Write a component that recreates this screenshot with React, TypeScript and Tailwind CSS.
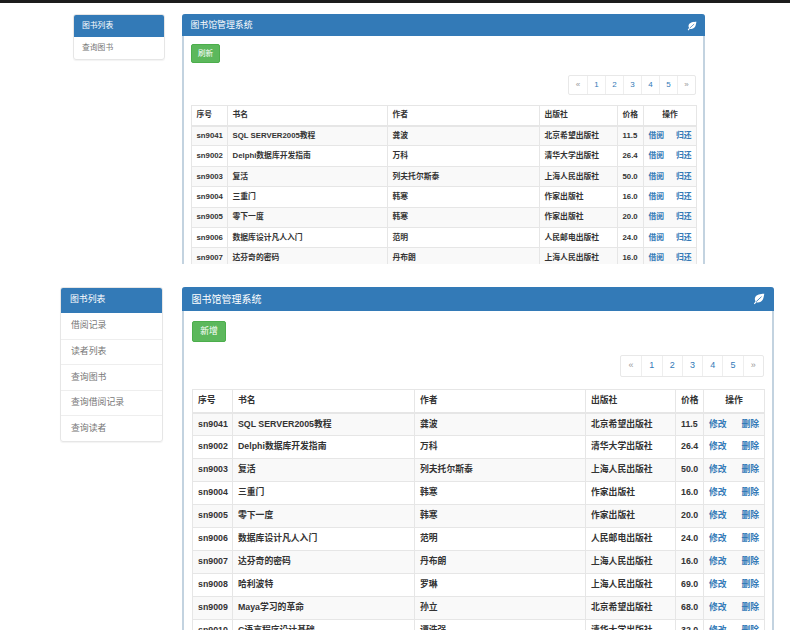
const font = { fontFamily: '"Liberation Sans", "Noto Sans CJK SC", sans-serif' };

const books = [
  ['sn9041', 'SQL SERVER2005教程', '龚波', '北京希望出版社', '11.5'],
  ['sn9002', 'Delphi数据库开发指南', '万科', '清华大学出版社', '26.4'],
  ['sn9003', '复活', '列夫托尔斯泰', '上海人民出版社', '50.0'],
  ['sn9004', '三重门', '韩寒', '作家出版社', '16.0'],
  ['sn9005', '零下一度', '韩寒', '作家出版社', '20.0'],
  ['sn9006', '数据库设计凡人入门', '范明', '人民邮电出版社', '24.0'],
  ['sn9007', '达芬奇的密码', '丹布朗', '上海人民出版社', '16.0'],
  ['sn9008', '哈利波特', '罗琳', '上海人民出版社', '69.0'],
  ['sn9009', 'Maya学习的革命', '孙立', '北京希望出版社', '68.0'],
  ['sn9010', 'C语言程序设计基础', '谭浩强', '清华大学出版社', '32.0'],
];

const pages = ['«', '1', '2', '3', '4', '5', '»'];

function Leaf({ size }: { size: number }) {
  return (
    <svg width={size} height={size} viewBox="0 0 14 14">
      <path
        d="M13.2 1C9 1.2 4.2 1.6 2.6 5 1.7 7 2.2 8.6 3 9.6L1 12.4 2 13.2 4 10.8C6.6 11.6 10 10.6 11.5 7.6 12.6 5.5 12.7 3 13.2 1Z"
        fill="#fff"
      />
      <path d="M3.8 10L10 4.2" stroke="#337ab7" strokeWidth="1" fill="none" />
    </svg>
  );
}

function Pagination({ small }: { small: boolean }) {
  return (
    <div className={small ? 'flex justify-end mt-[12px] mb-[10px]' : 'flex justify-end mt-[13px] mb-[12px]'}>
      <div className="flex border border-[#e8e8e8] rounded-[2px]">
        {pages.map((p, i) => (
          <span
            key={p}
            className={
              (small ? 'w-[18px] h-[18px] text-[8px] ' : 'w-[20.3px] h-[20px] text-[9px] ') +
              (i > 0 ? 'border-l border-[#eee] ' : '') +
              (i === 0 || i === 6 ? 'text-[#999] ' : 'text-[#337ab7] ') +
              'flex items-center justify-center'
            }
          >
            {p}
          </span>
        ))}
      </div>
    </div>
  );
}

function BookTable({ small, links, rows }: { small: boolean; links: string[]; rows: string[][] }) {
  const cols = small ? [36, 160, 152, 78, 26, 53] : [40, 182, 171, 90, 28, 61];
  const head = ['序号', '书名', '作者', '出版社', '价格'];
  const th = small
    ? 'h-[20px] border border-[#e6e6e6] border-b-2 px-[4.5px] font-bold whitespace-nowrap'
    : 'h-[23px] border border-[#e6e6e6] border-b-2 px-[5px] font-bold whitespace-nowrap';
  const td = small
    ? 'h-[20.4px] border border-[#e6e6e6] px-[4.5px] font-bold whitespace-nowrap'
    : 'h-[23px] border border-[#e6e6e6] px-[5px] font-bold whitespace-nowrap';
  return (
    <table
      className={
        (small ? 'w-[505px] text-[7.8px] ' : 'w-[572px] text-[8.8px] ') +
        'table-fixed border-collapse text-[#333]'
      }
    >
      <colgroup>
        {cols.map((w, i) => (
          <col key={i} style={{ width: w }} />
        ))}
      </colgroup>
      <thead>
        <tr>
          {head.map((h) => (
            <th key={h} className={th + ' text-left'}>
              {h}
            </th>
          ))}
          <th className={th + ' text-center'}>操作</th>
        </tr>
      </thead>
      <tbody>
        {rows.map((r, i) => (
          <tr key={r[0]} className={i % 2 === 0 ? 'bg-[#f9f9f9]' : 'bg-white'}>
            {r.map((c, j) => (
              <td key={j} className={td}>
                {c}
              </td>
            ))}
            <td className={td + ' text-[#337ab7]'}>
              <div className="flex justify-between">
                {links.map((l) => (
                  <a key={l}>{l}</a>
                ))}
              </div>
            </td>
          </tr>
        ))}
      </tbody>
    </table>
  );
}

function Sidebar({ small, items }: { small: boolean; items: string[] }) {
  return (
    <div
      className={
        (small ? 'w-[92px] text-[7.8px] ' : 'w-[103px] text-[8.9px] ') +
        'shrink-0 self-start rounded-[3px] border border-[#e6e6e6] shadow-[0_1px_1px_rgba(0,0,0,0.05)] overflow-hidden'
      }
    >
      <div
        className={
          (small ? 'h-[23px] pl-[9px] pt-[1px] ' : 'h-[26px] pl-[10px] ') +
          'flex items-center bg-[#337ab7] text-white -mx-px -mt-px'
        }
      >
        图书列表
      </div>
      {items.map((t, i) => (
        <div
          key={t}
          className={
            (small ? 'h-[22px] pl-[8px] ' : 'h-[25.6px] pl-[10px] ') +
            (i > 0 ? 'border-t border-[#eee] ' : '') +
            'flex items-center text-[#777]'
          }
        >
          {t}
        </div>
      ))}
    </div>
  );
}

function Panel({ small, action, links, rows }: { small: boolean; action: string; links: string[]; rows: string[][] }) {
  return (
    <div
      className={
        (small ? 'w-[523px] rounded-t-[3px] ' : 'w-[592px] rounded-t-[3px] ') +
        'shrink-0 self-start border-x-2 border-[#c3d3e0]'
      }
    >
      <div
        className={
          (small ? 'h-[22px] text-[8.9px] pl-[8.5px] pr-[8px] pt-[2px] ' : 'h-[24px] text-[10px] pl-[9.5px] pr-[9px] ') +
          'flex items-center justify-between bg-[#337ab7] text-white rounded-t-[3px] -mx-[2px]'
        }
      >
        <span>图书馆管理系统</span>
        <Leaf size={small ? 10 : 12} />
      </div>
      <div className={small ? 'px-[7px] pt-[8px]' : 'px-[8px] pt-[9.5px]'}>
        <button
          className={
            (small ? 'w-[29px] h-[19px] text-[7.5px] ' : 'w-[34px] h-[21.5px] text-[8.8px] ') +
            'block rounded-[2px] bg-[#5cb85c] border border-[#4cae4c] text-white'
          }
        >
          {action}
        </button>
        <Pagination small={small} />
        <BookTable small={small} links={links} rows={rows} />
      </div>
    </div>
  );
}

export default function App() {
  return (
    <div className="w-[800px] h-[630px] overflow-hidden bg-white" style={font}>
      <div className="w-[790px] h-[3px] bg-[#1c1c1c]" />
      <div className="h-[261px] overflow-hidden pt-[11px] pl-[73px] flex gap-[17px]">
        <Sidebar small items={['查询图书']} />
        <Panel small action="刷新" links={['借阅', '归还']} rows={books.slice(0, 7)} />
      </div>
      <div className="mt-[23px] pl-[60px] flex gap-[19px]">
        <Sidebar small={false} items={['借阅记录', '读者列表', '查询图书', '查询借阅记录', '查询读者']} />
        <Panel small={false} action="新增" links={['修改', '删除']} rows={books} />
      </div>
    </div>
  );
}
